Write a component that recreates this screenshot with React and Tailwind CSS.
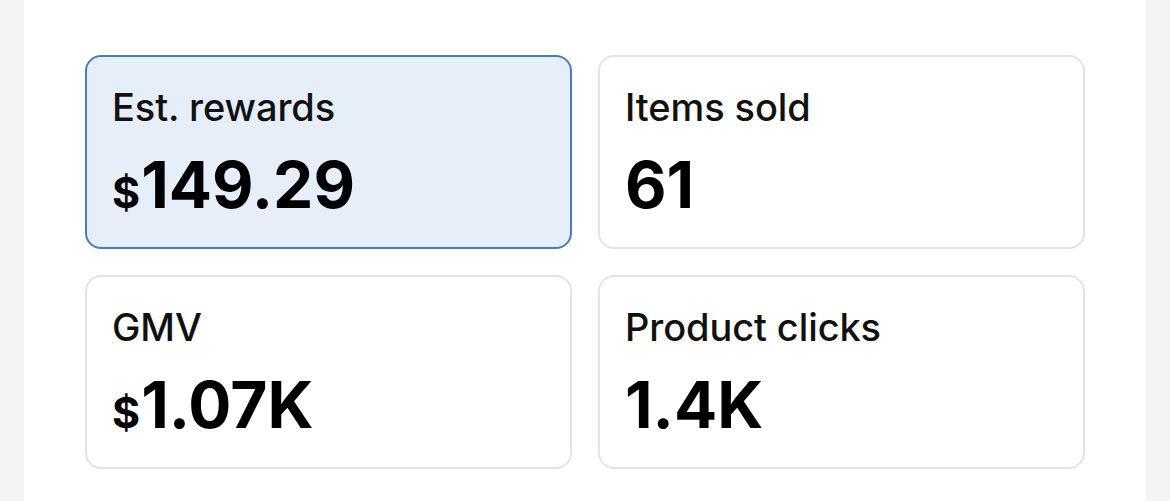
import React from "react";

function Card({ label, value, prefix, active }) {
  return (
    <div
      className={
        "h-[194px] rounded-[16px] border-2 pl-[25px] pt-[31px] " +
        (active ? "border-[#4a7bc0] bg-[#e6eff9]" : "border-[#e4e4e4] bg-white")
      }
    >
      <div className="text-[38px] font-medium leading-none text-[#111] tracking-[-0.1px]">{label}</div>
      <div className="mt-[27px] flex items-baseline leading-none text-black font-bold">
        {prefix && <span className="text-[43px] mr-[1px]">{prefix}</span>}
        <span className="text-[64px] tracking-[0px]">{value}</span>
      </div>
    </div>
  );
}

export default function App() {
  return (
    <div
      className="min-h-[501px] w-full bg-[#f4f4f4] px-[24px]"
      style={{ fontFamily: "Inter, 'Noto Sans', sans-serif" }}
    >
      <div className="min-h-[501px] bg-white px-[61px] pt-[55px]">
        <div className="grid grid-cols-2 gap-x-[26px] gap-y-[26px]">
          <Card label="Est. rewards" prefix="$" value="149.29" active />
          <Card label="Items sold" value="61" />
          <Card label="GMV" prefix="$" value="1.07K" />
          <Card label="Product clicks" value="1.4K" />
        </div>
      </div>
    </div>
  );
}
